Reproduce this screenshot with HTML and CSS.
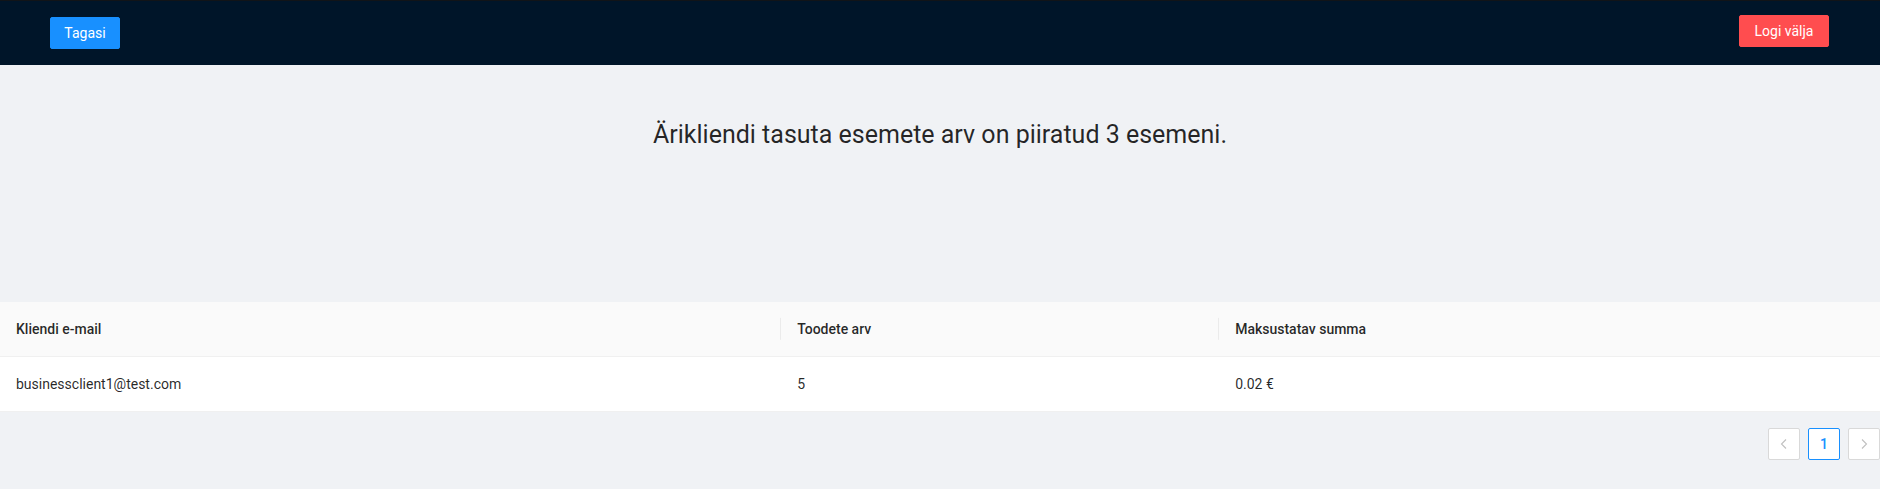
FILE: index.html
```html
<!DOCTYPE html>
<html lang="et">
<head>
<meta charset="utf-8">
<title>Ärikliendid</title>
<link rel="stylesheet" href="styles.css">
</head>
<body>
<header class="topbar">
  <button class="btn btn-primary btn-back" type="button">Tagasi</button>
  <button class="btn btn-danger btn-logout" type="button">Logi välja</button>
</header>
<main class="content">
  <section class="notice">
    <h3 class="notice-title">Ärikliendi tasuta esemete arv on piiratud 3 esemeni.</h3>
  </section>
  <table class="data-table">
    <thead>
      <tr>
        <th class="col-email">Kliendi e-mail</th>
        <th class="col-count">Toodete arv</th>
        <th class="col-sum">Maksustatav summa</th>
      </tr>
    </thead>
    <tbody>
      <tr>
        <td>businessclient1@test.com</td>
        <td>5</td>
        <td>0.02 €</td>
      </tr>
    </tbody>
  </table>
  <ul class="pagination">
    <li class="page-item page-nav disabled">
      <svg viewBox="0 0 12 12" width="12" height="12" aria-hidden="true"><polyline points="8,1.5 3.5,6 8,10.5" fill="none" stroke="currentColor" stroke-width="1.1"/></svg>
    </li>
    <li class="page-item active">1</li>
    <li class="page-item page-nav disabled">
      <svg viewBox="0 0 12 12" width="12" height="12" aria-hidden="true"><polyline points="4,1.5 8.5,6 4,10.5" fill="none" stroke="currentColor" stroke-width="1.1"/></svg>
    </li>
  </ul>
</main>
</body>
</html>
```
FILE: styles.css
```css
* { box-sizing: border-box; }
html, body {
  margin: 0;
  padding: 0;
}
body {
  background: #f0f2f5;
  font-family: Roboto, "Noto Sans", "Liberation Sans", sans-serif;
  font-size: 14px;
  line-height: 1.5715;
  color: rgba(0, 0, 0, 0.85);
}
.topbar {
  height: 65px;
  background: #001529;
  border-top: 1px solid #111418;
  padding: 0 51px 0 50px;
  display: flex;
  justify-content: space-between;
  align-items: flex-start;
}
.btn {
  height: 32px;
  padding: 4px 0;
  border-radius: 2px;
  border: 1px solid transparent;
  font-family: inherit;
  font-size: 14px;
  line-height: 1.5715;
  color: #fff;
  white-space: nowrap;
  text-align: center;
  cursor: pointer;
}
.btn-primary {
  background: #1890ff;
  border-color: #1890ff;
  width: 70px;
}
.btn-danger {
  background: #ff4d4f;
  border-color: #ff4d4f;
  width: 90px;
}
.btn-back { margin-top: 16px; }
.btn-logout { margin-top: 14px; }

.notice {
  padding: 54px 0 151px;
  text-align: center;
}
.notice-title {
  margin: 0;
  font-size: 25px;
  line-height: 32px;
  font-weight: 400;
  color: rgba(0, 0, 0, 0.85);
}

.data-table {
  width: 100%;
  border-collapse: collapse;
  background: #fff;
  table-layout: fixed;
}
.data-table th,
.data-table td {
  padding: 16px;
  text-align: left;
  border-bottom: 1px solid #f0f0f0;
  line-height: 22px;
}
.data-table th {
  position: relative;
  background: #fafafa;
  font-weight: 500;
  color: rgba(0, 0, 0, 0.85);
}
.data-table th:not(:last-child)::before {
  content: "";
  position: absolute;
  top: 50%;
  right: 0;
  width: 1px;
  height: 1.6em;
  background: rgba(0, 0, 0, 0.06);
  transform: translateY(-50%);
}
.col-email { width: 41.55%; }
.col-count { width: 23.3%; }

.pagination {
  list-style: none;
  margin: 16px 0;
  padding: 0;
  display: flex;
  justify-content: flex-end;
  gap: 8px;
}
.page-item {
  width: 32px;
  height: 32px;
  border: 1px solid #d9d9d9;
  border-radius: 2px;
  background: #fff;
  display: flex;
  align-items: center;
  justify-content: center;
  line-height: 30px;
}
.page-item.active {
  border-color: #1890ff;
  color: #1890ff;
  font-weight: 500;
}
.page-nav.disabled {
  color: rgba(0, 0, 0, 0.25);
}
```
